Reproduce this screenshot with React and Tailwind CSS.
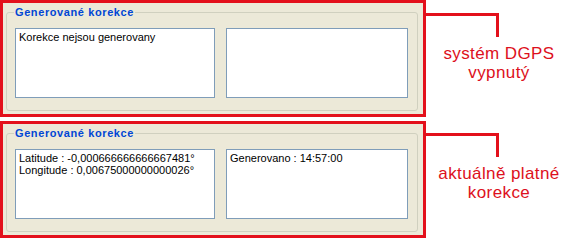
const RED = 'border-[#e3101b]';

function TextBox({ width, lines }) {
  return (
    <div
      className="h-[70px] border border-[#7f9db9] bg-white px-[3px] pt-[2px] text-[11px] leading-[12px] text-black"
      style={{ width }}
    >
      {lines.map((l) => (
        <div key={l}>{l}</div>
      ))}
    </div>
  );
}

function GroupBox({ left, right }) {
  return (
    <div className={`w-[426px] h-[117px] border-[3px] ${RED} bg-[#ece9d8] pt-[2px] pl-[3px] pr-[5px]`}>
      <fieldset className="h-[106px] rounded-[3px] border border-[#d0d0bf] px-[8px]">
        <legend className="ml-[-1px] px-[1px] text-[11px] leading-[14px] font-bold tracking-[0.6px] text-[#0046d5]">
          Generované korekce
        </legend>
        <div className="mt-[9px] flex gap-[11px]">
          <TextBox width={200} lines={left} />
          <TextBox width={182} lines={right} />
        </div>
      </fieldset>
    </div>
  );
}

function Note({ top, lines }) {
  return (
    <div className="flex flex-1 flex-col">
      <div className={`h-[24px] w-[73px] border-t-[3px] border-r-[3px] ${RED}`} style={{ marginTop: top }} />
      <div className="mt-[7px] text-center text-[17px] leading-[19px] tracking-[0.4px] text-[#dd1020]">
        {lines.map((l) => (
          <div key={l}>{l}</div>
        ))}
      </div>
    </div>
  );
}

export default function App() {
  return (
    <div
      className="flex h-[244px] w-[572px] flex-col gap-[4px] bg-white"
      style={{ fontFamily: '"Liberation Sans", Arial, sans-serif' }}
    >
      <div className="flex">
        <GroupBox left={['Korekce nejsou generovany']} right={[]} />
        <Note top={13} lines={['systém DGPS', 'vypnutý']} />
      </div>
      <div className="flex">
        <GroupBox
          left={['Latitude : -0,000666666666667481°', 'Longitude : 0,00675000000000026°']}
          right={['Generovano : 14:57:00']}
        />
        <Note top={12} lines={['aktuálně platné', 'korekce']} />
      </div>
    </div>
  );
}
